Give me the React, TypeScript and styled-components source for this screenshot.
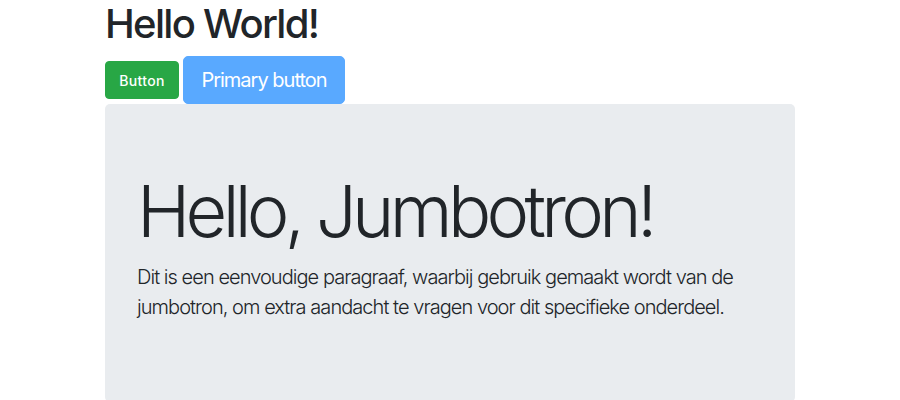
import React from "react";
import styled, { createGlobalStyle } from "styled-components";

const Global = createGlobalStyle`
  html, body { margin: 0; padding: 0; background: #fff; }
  body {
    font-family: Inter, "Noto Sans", sans-serif;
    font-size: 16px;
    line-height: 1.5;
    color: #212529;
  }
`;

const Container = styled.div`
  width: 720px;
  margin: 0 auto;
  padding: 0 15px;
  box-sizing: border-box;
`;

const Title = styled.h1`
  margin: 0 0 8px;
  font-size: 40px;
  font-weight: 500;
  line-height: 48px;
  letter-spacing: -1.7px;
`;

const ButtonRow = styled.div`
  display: flex;
  align-items: center;
  gap: 4px;
`;

const Button = styled.button<{ $variant: "success" | "primary" }>`
  font-family: inherit;
  border: 1px solid transparent;
  color: #fff;
  box-sizing: border-box;
  display: inline-flex;
  align-items: center;
  justify-content: center;
  cursor: pointer;
  padding: 0;
  ${(p) =>
    p.$variant === "success"
      ? `background: #28a745; border-color: #28a745; font-size: 14px; font-weight: 500; letter-spacing: 0.3px; height: 38px; width: 74px; border-radius: 4px;`
      : `background: #59a9ff; border-color: #59a9ff; font-size: 20px; font-weight: 400; letter-spacing: -1px; height: 48px; width: 162px; border-radius: 5px;`}
`;

const Jumbotron = styled.div`
  background: #e9ecef;
  border-radius: 5px;
  padding: 64px 32px;
`;

const Display = styled.h1`
  margin: 0 0 8px;
  font-size: 72px;
  font-weight: 300;
  line-height: 1.2;
  letter-spacing: -4.7px;
`;

const Lead = styled.p`
  margin: 0 0 16px;
  font-size: 20px;
  font-weight: 300;
  line-height: 30px;
  letter-spacing: -0.95px;
`;

export default function App() {
  return (
    <>
      <Global />
      <Container>
        <Title>Hello World!</Title>
        <ButtonRow>
          <Button $variant="success">Button</Button>
          <Button $variant="primary">Primary button</Button>
        </ButtonRow>
        <Jumbotron>
          <Display>Hello, Jumbotron!</Display>
          <Lead>
            Dit is een eenvoudige paragraaf, waarbij gebruik gemaakt wordt van de
            jumbotron, om extra aandacht te vragen voor dit specifieke onderdeel.
          </Lead>
        </Jumbotron>
      </Container>
    </>
  );
}
